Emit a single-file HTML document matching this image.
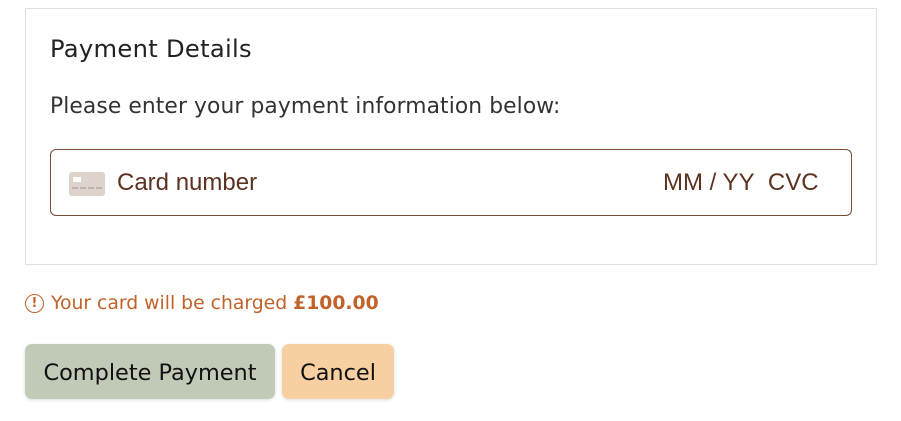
<!DOCTYPE html>
<html><head><style>
body{margin:0;width:901px;height:421px;background:#fff;font-family:"DejaVu Sans","Liberation Sans",sans-serif;position:relative;overflow:hidden}
.box{position:absolute;left:25px;top:8px;width:850px;height:255px;border:1px solid #e0e0e0}
h2{position:absolute;left:50px;top:35px;margin:0;font-weight:normal;font-size:24.2px;color:#222;letter-spacing:0.3px}
.p{position:absolute;left:50px;top:94px;font-size:21.8px;color:#333;letter-spacing:0.1px}
.inp{position:absolute;left:50px;top:149px;width:800px;height:65px;border:1px solid #7a4a36;border-radius:6px}
.card{position:absolute;left:18px;top:22px;width:36px;height:24px;background:#ddd3cd;border-radius:3px}
.card:before{content:"";position:absolute;left:4px;top:5px;width:8px;height:5px;background:#fff}
.card:after{content:"";position:absolute;left:3px;top:15px;width:30px;height:0;border-top:2px dashed #c3b4ab}
.inp span{position:absolute;top:19px;font-family:"Liberation Sans",sans-serif;font-size:24px;color:#5c3220}
.warn{position:absolute;left:51px;top:293px;font-size:18.8px;color:#c0622a;letter-spacing:0}
.ic{position:absolute;left:25px;top:294px;width:17px;height:17px;border:1.6px solid #c0622a;border-radius:50%;text-align:center;font-size:13px;line-height:17px;font-weight:bold;color:#c0622a}
.btn{position:absolute;top:344px;height:55px;border-radius:7px;font-size:22.4px;line-height:58px;text-align:center;color:#111;box-shadow:0 1px 3px rgba(0,0,0,.15)}
</style></head><body>
<div class="box"></div>
<h2>Payment Details</h2>
<div class="p">Please enter your payment information below:</div>
<div class="inp"><div class="card"></div><span style="left:66px">Card number</span><span style="left:612px">MM / YY&nbsp; CVC</span></div>
<div class="ic">!</div>
<div class="warn">Your card will be charged <b>£100.00</b></div>
<div class="btn" style="left:25px;width:250px;background:#c1cab7">Complete Payment</div>
<div class="btn" style="left:282px;width:112px;background:#f7cfa0">Cancel</div>
</body></html>
